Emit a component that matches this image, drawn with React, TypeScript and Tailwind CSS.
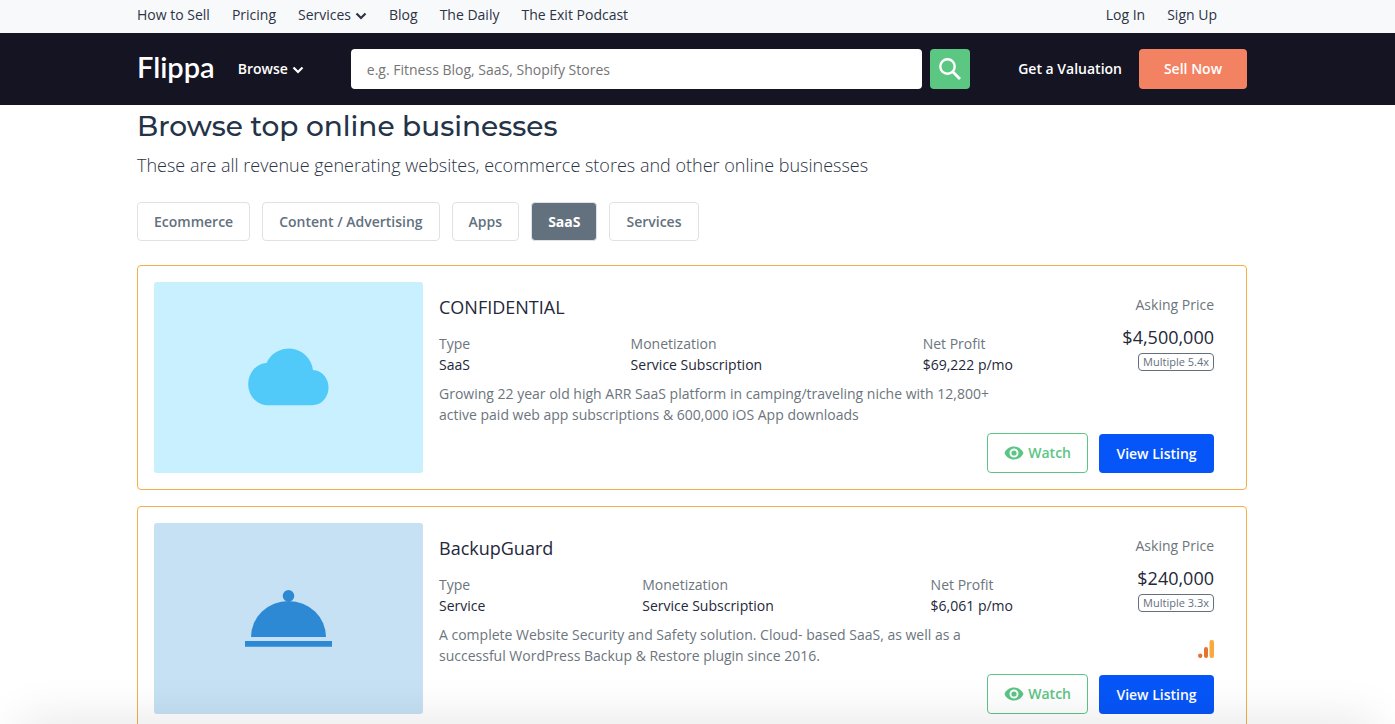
import clsx from "clsx"

const navLink = "hover:underline"

const Chevron = () => (
	<svg width="12" height="8" viewBox="0 0 12 8" fill="none" className="mt-0.5">
		<path d="M1.500 1.500 6 6l4.500-4.500" stroke="currentColor" strokeWidth="2.200" />
	</svg>
)

const Cloud = () => (
	<svg width="81" height="60" viewBox="0 0 81 60" fill="#51caf9">
		<path d="M20.500 57.200 A19.300 21.100 0 0 1 18.500 15 A24.400 24.400 0 0 1 65 22 A16 17.600 0 0 1 64 57.200 Z" />
	</svg>
)

const Cloche = () => (
	<svg width="88" height="58" viewBox="0 0 88 58" fill="#2d89d3">
		<circle cx="43.500" cy="5.800" r="5.800" />
		<path d="M6 47 A37.500 36 0 0 1 81 47 Z" />
		<path d="M0 51h87v5.700h-87z" />
	</svg>
)

const Eye = () => (
	<svg width="20" height="14" viewBox="0 0 20 14" fill="currentColor">
		<path
			fillRule="evenodd"
			d="M10 .5C5.700 .5 2 3.100 .5 7c1.500 3.900 5.200 6.500 9.500 6.500s8-2.600 9.500-6.500C18 3.100 14.300.5 10 .5Zm0 11a4.500 4.500 0 1 1 0-9 4.500 4.500 0 0 1 0 9Z"
		/>
		<circle cx="10" cy="7" r="2.600" />
	</svg>
)

const Analytics = () => (
	<svg width="16" height="18" viewBox="0 0 16 18">
		<circle cx="2.200" cy="15.800" r="2.200" fill="#e37533" />
		<rect x="6" y="7" width="4" height="11" rx="2" fill="#e37533" />
		<rect x="11.500" y="0" width="4.500" height="18" rx="2" fill="#f8ab3c" />
	</svg>
)

const tabs = ["Ecommerce", "Content / Advertising", "Apps", "SaaS", "Services"]

const listings = [
	{
		title: "CONFIDENTIAL",
		type: "SaaS",
		monetization: "Service Subscription",
		profit: "$69,222 p/mo",
		price: "$4,500,000",
		multiple: "Multiple 5.4x",
		description:
			"Growing 22 year old high ARR SaaS platform in camping/traveling niche with 12,800+ active paid web app subscriptions & 600,000 iOS App downloads",
		art: <Cloud />,
		artClass: "bg-[#c8f0fe]",
		analytics: false
	},
	{
		title: "BackupGuard",
		type: "Service",
		monetization: "Service Subscription",
		profit: "$6,061 p/mo",
		price: "$240,000",
		multiple: "Multiple 3.3x",
		description:
			"A complete Website Security and Safety solution. Cloud- based SaaS, as well as a successful WordPress Backup & Restore plugin since 2016.",
		art: <Cloche />,
		artClass: "bg-[#c6e1f4]",
		analytics: true
	}
]

type Listing = (typeof listings)[number]

const Fact = ({ label, value }: { label: string; value: string }) => (
	<div>
		<dt className="text-[#6c757d]">{label}</dt>
		<dd className="font-medium text-[#23283a]">{value}</dd>
	</div>
)

const ListingCard = ({ listing }: { listing: Listing }) => (
	<article className="flex gap-4 rounded border border-[#f5ae45] p-4">
		<div
			className={clsx(
				"flex w-[269px] shrink-0 items-center justify-center rounded-[3px]",
				listing.artClass
			)}
		>
			{listing.art}
		</div>
		<div className="flex flex-1 flex-col justify-between gap-2 pr-4">
			<div className="flex pt-3">
				<div className="flex-1">
					<h2 className="text-lg leading-[27px] text-[#23283a]">
						{listing.title}
					</h2>
					<dl className="mt-3 flex justify-between leading-[21px]">
						<Fact label="Type" value={listing.type} />
						<Fact label="Monetization" value={listing.monetization} />
						<Fact label="Net Profit" value={listing.profit} />
					</dl>
					<p className="mt-2 leading-[21px] text-[#6c757d]">
						{listing.description}
					</p>
				</div>
				<div className="flex w-[201px] flex-col items-end">
					<span className="leading-[21px] text-[#6c757d]">Asking Price</span>
					<span className="mt-[9px] text-lg leading-[27px] text-[#23283a]">
						{listing.price}
					</span>
					<span className="mt-0.5 rounded border border-[#63707e] px-1 text-[11px] leading-4 text-[#63707e]">
						{listing.multiple}
					</span>
					{listing.analytics && (
						<span className="mt-7">
							<Analytics />
						</span>
					)}
				</div>
			</div>
			<div className="flex justify-end gap-[11px]">
				<button className="flex h-10 items-center gap-1 rounded border border-[#5bc584] bg-white px-4 font-semibold text-[#5bc584]">
					<Eye />
					Watch
				</button>
				<button className="mt-px h-[39px] w-[115px] rounded bg-[#0655f8] font-semibold text-white">
					View Listing
				</button>
			</div>
		</div>
	</article>
)

export default function App() {
	return (
		<div className="h-screen overflow-hidden bg-white font-['Open_Sans',sans-serif] text-sm text-[#2b3445]">
			<div className="bg-[#f8f9fb] pr-[11px]">
				<nav className="mx-auto flex h-[33px] max-w-[1110px] items-center gap-[22px] pr-[30px] pb-1">
					<a href="#how" className={navLink}>
						How to Sell
					</a>
					<a href="#pricing" className={navLink}>
						Pricing
					</a>
					<a href="#services" className="flex items-center gap-1">
						Services <Chevron />
					</a>
					<a href="#blog" className={navLink}>
						Blog
					</a>
					<a href="#daily" className={navLink}>
						The Daily
					</a>
					<a href="#podcast" className={navLink}>
						The Exit Podcast
					</a>
					<a href="#login" className="ml-auto hover:underline">
						Log In
					</a>
					<a href="#signup" className={navLink}>
						Sign Up
					</a>
				</nav>
			</div>

			<header className="bg-[#151422] pr-[11px] text-white">
				<div className="mx-auto flex h-[72px] max-w-[1110px] items-center">
					<a
						href="#home"
						className="pb-1 font-['Lato',sans-serif] text-[29px] leading-9 font-semibold"
					>
						Flippa
					</a>
					<button className="ml-[23px] flex items-center gap-1 font-semibold">
						Browse <Chevron />
					</button>
					<form className="ml-[47px] flex flex-1 gap-2">
						<input
							type="text"
							aria-label="Search listings"
							placeholder="e.g. Fitness Blog, SaaS, Shopify Stores"
							className="h-10 min-w-0 flex-1 rounded bg-white px-4 text-[#23283a] placeholder:text-[#757575]"
						/>
						<button
							type="button"
							aria-label="Search"
							className="flex h-10 w-10 items-center justify-center rounded bg-[#5bc782]"
						>
							<svg width="22" height="22" viewBox="0 0 22 22" fill="none">
								<circle cx="8.500" cy="8.500" r="7.200" stroke="#fff" strokeWidth="2.400" />
								<path d="m13.500 13.500 7.500 7.500" stroke="#fff" strokeWidth="2.800" />
							</svg>
						</button>
					</form>
					<a href="#valuation" className="ml-12 font-semibold">
						Get a Valuation
					</a>
					<button className="ml-[17px] h-10 w-[108px] rounded bg-[#f38263] font-semibold">
						Sell Now
					</button>
				</div>
			</header>

			<main className="pr-[11px]">
				<div className="mx-auto max-w-[1110px] pt-[3px]">
					<h1 className="font-['Montserrat','Inter',sans-serif] text-[28px] leading-9 font-medium text-[#243347]">
						Browse top online businesses
					</h1>
					<p className="mt-2 text-lg leading-[27px] font-light">
						These are all revenue generating websites, ecommerce stores and
						other online businesses
					</p>
					<div className="mt-[23px] flex gap-3">
						{tabs.map((tab) => (
							<button
								key={tab}
								className={clsx(
									"h-[39px] rounded border border-[#dee2e6] px-4",
									tab === "SaaS"
										? "bg-[#63707e] font-bold text-white"
										: "font-semibold text-[#63707e]"
								)}
							>
								{tab}
							</button>
						))}
					</div>
					<div className="mt-6 flex flex-col gap-4">
						{listings.map((listing) => (
							<ListingCard key={listing.title} listing={listing} />
						))}
					</div>
				</div>
			</main>

			<div className="pointer-events-none fixed inset-x-5 -bottom-10 h-10 shadow-[0_0_50px_rgba(0,0,0,0.12)]" />
		</div>
	)
}
